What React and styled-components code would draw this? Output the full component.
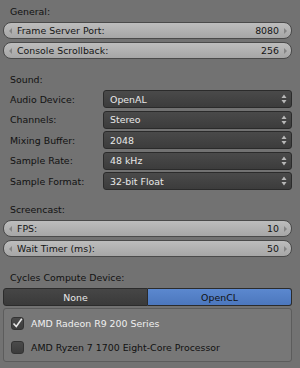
import React from "react";
import styled, { createGlobalStyle } from "styled-components";

const Global = createGlobalStyle`
  html, body { margin: 0; padding: 0; background: #727272; }
  body { font-family: "DejaVu Sans", sans-serif; font-size: 9.4px; }
`;

const Panel = styled.div`
  width: 300px;
  height: 368px;
  box-sizing: border-box;
  padding: 5px 8px 0 3px;
  display: flex;
  flex-direction: column;
  background: #727272;
  overflow: hidden;
`;

const Heading = styled.div`
  color: #111;
  height: 13px;
  line-height: 13px;
  padding-left: 7px;
  margin-top: ${(p) => p.$top || 0}px;
  margin-bottom: ${(p) => p.$bottom || 4}px;
`;

const NumField = styled.div`
  height: 17px;
  box-sizing: border-box;
  border: 1px solid #4a4a4a;
  border-radius: 8px;
  background: linear-gradient(#bdbdbd, #a6a6a6);
  display: flex;
  align-items: center;
  padding: 0 4px 0 5px;
  color: #141414;
  margin-bottom: ${(p) => p.$gap || 0}px;
`;

const Arrow = styled.span`
  width: 0;
  height: 0;
  border-top: 3px solid transparent;
  border-bottom: 3px solid transparent;
  ${(p) => (p.$dir === "left" ? "border-right: 3px solid #858585;" : "border-left: 3px solid #858585;")}
`;

const FieldLabel = styled.span`
  flex: 1;
  padding-left: 5px;
`;

const FieldValue = styled.span`
  padding-right: 5px;
`;

const Rows = styled.div`
  display: flex;
  flex-direction: column;
  gap: 2.5px;
`;

const Row = styled.div`
  display: flex;
  align-items: center;
  height: 18px;
`;

const RowLabel = styled.div`
  width: 100px;
  flex: none;
  box-sizing: border-box;
  padding-left: 7px;
  color: #111;
`;

const Select = styled.div`
  flex: 1;
  height: 18px;
  box-sizing: border-box;
  border: 1px solid #2b2b2b;
  border-radius: 3px;
  background: linear-gradient(#4a4a4a, #3c3c3c);
  color: #e8e8e8;
  display: flex;
  align-items: center;
  padding: 0 4px 0 6px;
`;

const SelectText = styled.span`
  flex: 1;
`;

const UpDown = () => (
  <svg width="6" height="10" viewBox="0 0 6 10">
    <polygon points="3,0.5 5.5,4 0.5,4" fill="#b8b8b8" />
    <polygon points="0.5,6 5.5,6 3,9.5" fill="#b8b8b8" />
  </svg>
);

const Toggle = styled.div`
  display: flex;
  height: 18px;
  margin-bottom: 2px;
`;

const ToggleBtn = styled.div`
  flex: 1;
  box-sizing: border-box;
  display: flex;
  align-items: center;
  justify-content: center;
  border: 1px solid #2b2b2b;
  ${(p) =>
    p.$active
      ? `background: linear-gradient(#5b88cf, #4c77bd); color: #111; border-radius: 0 3px 3px 0; border-left: none;`
      : `background: linear-gradient(#464646, #3a3a3a); color: #e8e8e8; border-radius: 3px 0 0 3px;`}
`;

const Box = styled.div`
  height: 54px;
  box-sizing: border-box;
  border: 1px solid #5c5c5c;
  border-radius: 3px;
  background: #777;
  display: flex;
  flex-direction: column;
  padding: 8px 0 0 7px;
  gap: 11px;
`;

const CheckRow = styled.div`
  display: flex;
  align-items: center;
  gap: 7px;
  height: 13px;
  color: ${(p) => (p.$on ? "#f0f0f0" : "#111")};
`;

const Check = styled.div`
  width: 13px;
  height: 13px;
  box-sizing: border-box;
  border: 1px solid #333;
  border-radius: 3px;
  background: linear-gradient(#4a4a4a, #3c3c3c);
  display: flex;
  align-items: center;
  justify-content: center;
`;

const Tick = () => (
  <svg width="11" height="11" viewBox="0 0 11 11">
    <path d="M1.5 5.5 L4.3 8.5 L9.8 0.8" stroke="#e8e8e8" strokeWidth="1.6" fill="none" />
  </svg>
);

const NumberField = ({ label, value, gap }) => (
  <NumField $gap={gap}>
    <Arrow $dir="left" />
    <FieldLabel>{label}</FieldLabel>
    <FieldValue>{value}</FieldValue>
    <Arrow $dir="right" />
  </NumField>
);

const sound = [
  ["Audio Device:", "OpenAL"],
  ["Channels:", "Stereo"],
  ["Mixing Buffer:", "2048"],
  ["Sample Rate:", "48 kHz"],
  ["Sample Format:", "32-bit Float"],
];

export default function App() {
  return (
    <>
      <Global />
      <Panel>
        <Heading>General:</Heading>
        <NumberField label="Frame Server Port:" value="8080" gap={3} />
        <NumberField label="Console Scrollback:" value="256" />
        <Heading $top={14}>Sound:</Heading>
        <Rows>
          {sound.map(([l, v]) => (
            <Row key={l}>
              <RowLabel>{l}</RowLabel>
              <Select>
                <SelectText>{v}</SelectText>
                <UpDown />
              </Select>
            </Row>
          ))}
        </Rows>
        <Heading $top={13}>Screencast:</Heading>
        <NumberField label="FPS:" value="10" gap={3} />
        <NumberField label="Wait Timer (ms):" value="50" />
        <Heading $top={14}>Cycles Compute Device:</Heading>
        <Toggle>
          <ToggleBtn>None</ToggleBtn>
          <ToggleBtn $active>OpenCL</ToggleBtn>
        </Toggle>
        <Box>
          <CheckRow $on>
            <Check>
              <Tick />
            </Check>
            AMD Radeon R9 200 Series
          </CheckRow>
          <CheckRow>
            <Check />
            AMD Ryzen 7 1700 Eight-Core Processor
          </CheckRow>
        </Box>
      </Panel>
    </>
  );
}
